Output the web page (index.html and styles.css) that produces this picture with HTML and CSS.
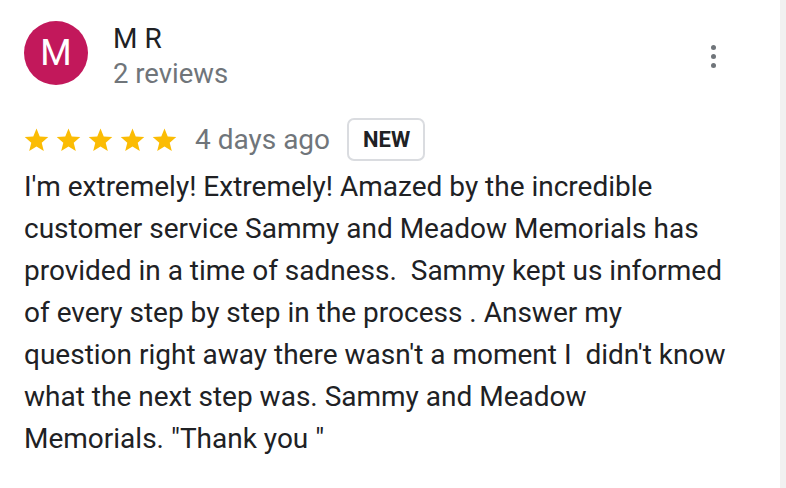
FILE: index.html
```html
<!DOCTYPE html>
<html lang="en">
<head>
    <meta charset="UTF-8">
    <title>Review</title>
    <link rel="stylesheet" href="styles.css">
</head>
<body>
    <div class="page">
        <div class="review">
            <!-- Header: avatar, name, menu -->
            <div class="review-head">
                <div class="avatar">M</div>
                <div class="author">
                    <div class="author-name">M R</div>
                    <div class="author-meta">2 reviews</div>
                </div>
                <div class="menu">
                    <span></span><span></span><span></span>
                </div>
            </div>

            <!-- Rating row -->
            <div class="rating">
                <div class="stars">
                    <svg viewBox="0 0 24 24"><path d="M12 1.5l3.1 7.6 8.2.6-6.3 5.3 2 8-7-4.4-7 4.4 2-8L.7 9.7l8.2-.6z"/></svg>
                    <svg viewBox="0 0 24 24"><path d="M12 1.5l3.1 7.6 8.2.6-6.3 5.3 2 8-7-4.4-7 4.4 2-8L.7 9.7l8.2-.6z"/></svg>
                    <svg viewBox="0 0 24 24"><path d="M12 1.5l3.1 7.6 8.2.6-6.3 5.3 2 8-7-4.4-7 4.4 2-8L.7 9.7l8.2-.6z"/></svg>
                    <svg viewBox="0 0 24 24"><path d="M12 1.5l3.1 7.6 8.2.6-6.3 5.3 2 8-7-4.4-7 4.4 2-8L.7 9.7l8.2-.6z"/></svg>
                    <svg viewBox="0 0 24 24"><path d="M12 1.5l3.1 7.6 8.2.6-6.3 5.3 2 8-7-4.4-7 4.4 2-8L.7 9.7l8.2-.6z"/></svg>
                </div>
                <span class="date">4 days ago</span>
                <span class="badge">NEW</span>
            </div>

            <!-- Review text -->
            <p class="review-text">I'm extremely! Extremely! Amazed by the incredible customer service Sammy and Meadow Memorials has provided in a time of sadness.  Sammy kept us informed of every step by step in the process . Answer my question right away there wasn't a moment I  didn't know what the next step was. Sammy and Meadow Memorials. "Thank you "</p>
        </div>
        <div class="scrollbar"></div>
    </div>
</body>
</html>
```

FILE: styles.css
```css
/* Base page */
body {
    margin: 0;
    font-family: Roboto, "Liberation Sans", Arial, sans-serif;
    background: #ffffff;
    color: #202124;
}

.page {
    display: flex;
    height: 488px;
    overflow: hidden;
}

.review {
    flex: 1;
    padding: 20px 0 0 24px;
}

/* Scrollbar strip on the right */
.scrollbar {
    width: 6px;
    background: #f1f1f1;
}

/* Header */
.review-head {
    display: flex;
    align-items: flex-start;
}

.avatar {
    width: 64px;
    height: 64px;
    border-radius: 50%;
    background: #c2185b;
    color: #ffffff;
    font-size: 36px;
    display: flex;
    align-items: center;
    justify-content: center;
    flex-shrink: 0;
    margin-top: 1px;
}

.author {
    margin-left: 25px;
    padding-top: 1px;
    flex: 1;
}

.author-name {
    font-size: 28px;
    line-height: 36px;
}

.author-meta {
    font-size: 27.5px;
    line-height: 34px;
    color: #70757a;
}

/* Three dot menu */
.menu {
    display: flex;
    flex-direction: column;
    gap: 4px;
    margin: 25px 64px 0 0;
}

.menu span {
    width: 5px;
    height: 5px;
    border-radius: 50%;
    background: #70757a;
}

/* Rating row */
.rating {
    display: flex;
    align-items: center;
    margin-top: 26px;
    height: 44px;
}

.stars {
    display: flex;
    gap: 7px;
    margin-right: 18px;
}

.stars svg {
    width: 25px;
    height: 25px;
    fill: #fbbc04;
}

.date {
    font-size: 28px;
    color: #70757a;
    margin-right: 17px;
}

.badge {
    border: 2px solid #dadce0;
    border-radius: 7px;
    padding: 0 13px 0 14px;
    height: 39px;
    line-height: 39px;
    font-size: 22px;
    font-weight: bold;
    color: #202124;
}

/* Review body */
.review-text {
    margin: 5px 0 0 0;
    width: 702px;
    font-size: 28px;
    line-height: 42px;
    white-space: pre-wrap;
}
```
